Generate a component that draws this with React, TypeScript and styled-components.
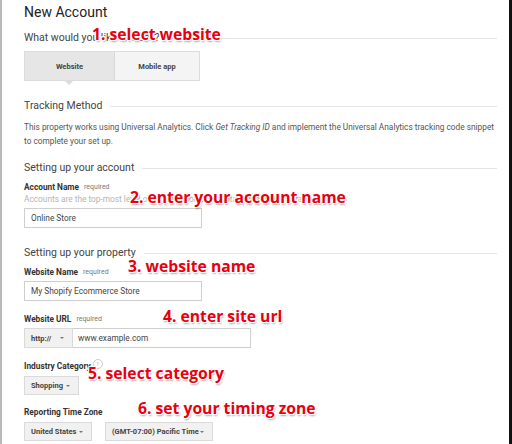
import React from "react";
import styled, { createGlobalStyle } from "styled-components";

const Global = createGlobalStyle`
  html, body { margin: 0; padding: 0; background: #fff; }
  body { font-family: Roboto, "Liberation Sans", Arial, sans-serif; }
`;

const Page = styled.div`
  position: relative;
  width: 512px;
  height: 444px;
  box-sizing: border-box;
  border-left: 2px solid #b9b9b9;
  border-right: 3px solid #111;
  padding: 4px 12px 0 22px;
  overflow: hidden;
  background: #fff;
  color: #333;
`;

const Title = styled.h1`
  margin: 0;
  font-size: 14px;
  line-height: 16px;
  font-weight: 400;
  color: #222;
`;

const Section = styled.div<{ $mt: number }>`
  display: flex;
  align-items: center;
  gap: 8px;
  margin-top: ${(p) => p.$mt}px;
  font-size: 10.5px;
  line-height: 14px;
  color: #444;
  white-space: nowrap;
  &::after {
    content: "";
    flex: 1;
    height: 1px;
    background: #e6e6e6;
  }
`;

const Toggle = styled.div`
  position: relative;
  display: flex;
  width: 176px;
  height: 30px;
  margin-top: 6px;
  border: 1px solid #dcdcdc;
  box-sizing: border-box;
`;

const Seg = styled.div<{ $active?: boolean }>`
  position: relative;
  flex: ${(p) => (p.$active ? "0 0 89px" : "1")};
  display: flex;
  align-items: center;
  justify-content: center;
  font-size: 7.5px;
  font-weight: 700;
  color: #444;
  background: ${(p) => (p.$active ? "#e6e6e6" : "#f4f4f4")};
  ${(p) => (p.$active ? "border-right: 1px solid #d8d8d8;" : "")}
  ${(p) =>
    p.$active
      ? `&::after {
    content: "";
    position: absolute;
    left: 40px;
    bottom: -5px;
    border-left: 4px solid transparent;
    border-right: 4px solid transparent;
    border-top: 4px solid #dcdcdc;
  }`
      : ""}
`;

const Desc = styled.p`
  margin: 7px 0 0;
  font-size: 8.3px;
  line-height: 14px;
  color: #555;
  em { font-style: italic; }
`;

const Label = styled.div<{ $mt: number }>`
  margin-top: ${(p) => p.$mt}px;
  display: flex;
  align-items: center;
  gap: 5px;
  font-size: 8.3px;
  line-height: 12px;
  font-weight: 700;
  color: #333;
`;

const Req = styled.span`
  font-size: 7px;
  font-weight: 400;
  color: #777;
`;

const Help = styled.span`
  display: inline-flex;
  align-items: center;
  justify-content: center;
  width: 8px;
  height: 8px;
  border: 1px solid #ccc;
  border-radius: 50%;
  font-size: 6px;
  font-weight: 400;
  color: #bbb;
  margin-left: -3px;
  margin-top: -4px;
`;

const Hint = styled.div`
  font-size: 8.3px;
  line-height: 12px;
  color: #b5b5b5;
`;

const Input = styled.div<{ $w: number; $mt: number; $h?: number }>`
  width: ${(p) => p.$w}px;
  height: ${(p) => p.$h ?? 20}px;
  margin-top: ${(p) => p.$mt}px;
  box-sizing: border-box;
  border: 1px solid #cfcfcf;
  display: flex;
  align-items: center;
  padding-left: 6px;
  font-size: 8.3px;
  color: #444;
  background: #fff;
`;

const Row = styled.div<{ $mt: number; $gap?: number }>`
  display: flex;
  gap: ${(p) => p.$gap ?? 0}px;
  margin-top: ${(p) => p.$mt}px;
`;

const UrlInput = styled.div`
  width: 178px;
  height: 20px;
  box-sizing: border-box;
  border: 1px solid #cfcfcf;
  border-left: none;
  display: flex;
  align-items: center;
  padding-left: 5px;
  font-size: 8.3px;
  color: #444;
`;

const Select = styled.div<{ $w: number; $h?: number }>`
  width: ${(p) => p.$w}px;
  height: ${(p) => p.$h ?? 19}px;
  box-sizing: border-box;
  border: 1px solid #dadada;
  background: #f1f1f1;
  display: flex;
  align-items: center;
  justify-content: space-between;
  padding: 0 8px 0 6px;
  font-size: 7.5px;
  font-weight: 700;
  color: #444;
  &::after {
    content: "";
    border-left: 2.5px solid transparent;
    border-right: 2.5px solid transparent;
    border-top: 2.5px solid #777;
  }
`;

const Note = styled.div<{ $x: number; $y: number }>`
  position: absolute;
  left: ${(p) => p.$x}px;
  top: ${(p) => p.$y}px;
  font-family: "Open Sans", "DejaVu Sans", sans-serif;
  font-size: 15.7px;
  font-weight: 700;
  line-height: 20px;
  color: #e60010;
  white-space: nowrap;
  text-shadow: -1px -1px 0 #fff, 1px -1px 0 #fff, -1px 1px 0 #fff,
    1px 1px 0 #fff, 0 -1px 0 #fff, 0 1px 0 #fff, -1px 0 0 #fff, 1px 0 0 #fff,
    1px 2px 2px rgba(0, 0, 0, 0.35);
`;

export default function App() {
  return (
    <>
      <Global />
      <Page>
        <Title>New Account</Title>
        <Section $mt={11}>What would you like to track?</Section>
        <Toggle>
          <Seg $active>Website</Seg>
          <Seg>Mobile app</Seg>
        </Toggle>
        <Section $mt={18}>Tracking Method</Section>
        <Desc>
          This property works using Universal Analytics. Click <em>Get Tracking ID</em> and
          implement the Universal Analytics tracking code snippet
          <br />
          to complete your set up.
        </Desc>
        <Section $mt={13}>Setting up your account</Section>
        <Label $mt={6}>
          Account Name <Req>required</Req>
        </Label>
        <Hint>Accounts are the top-most level of organization and contain one or more tracking IDs.</Hint>
        <Input $w={178} $mt={3}>Online Store</Input>
        <Section $mt={18}>Setting up your property</Section>
        <Label $mt={6}>
          Website Name <Req>required</Req>
        </Label>
        <Input $w={178} $mt={3}>My Shopify Ecommerce Store</Input>
        <Label $mt={12}>
          Website URL <Req>required</Req>
        </Label>
        <Row $mt={3}>
          <Select $w={49} $h={20}>http://</Select>
          <UrlInput>www.example.com</UrlInput>
        </Row>
        <Label $mt={12}>
          Industry Category <Help>?</Help>
        </Label>
        <Row $mt={4}>
          <Select $w={55}>Shopping</Select>
        </Row>
        <Label $mt={11}>Reporting Time Zone</Label>
        <Row $mt={4} $gap={13}>
          <Select $w={68}>United States</Select>
          <Select $w={108}>(GMT-07:00) Pacific Time</Select>
        </Row>

        <Note $x={90} $y={24}>1. select website</Note>
        <Note $x={128} $y={187}>2. enter your account name</Note>
        <Note $x={126} $y={256}>3. website name</Note>
        <Note $x={161} $y={306}>4. enter site url</Note>
        <Note $x={86} $y={363}>5. select category</Note>
        <Note $x={136} $y={398}>6. set your timing zone</Note>
      </Page>
    </>
  );
}
